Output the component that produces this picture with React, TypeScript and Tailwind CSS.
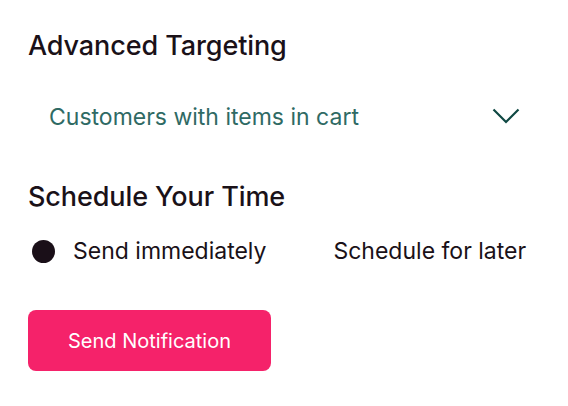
import { useState } from "react";

const options = ["Send immediately", "Schedule for later"];

export default function App() {
    const [picked, setPicked] = useState(0);

    return (
        <div className="w-[568px] h-[406px] bg-white px-7 pt-[30px]" style={{ fontFamily: "Inter, 'Noto Sans', sans-serif" }}>
            <h2 className="text-[27px] leading-[32px] font-medium text-[#1a1118] tracking-[-0.1px]">Advanced Targeting</h2>

            <div className="mt-[35px] flex items-center justify-between pl-[21px] pr-[20px] h-[40px]">
                <span className="text-[23px] leading-[28px] text-[#2f6a64]">Customers with items in cart</span>
                <svg width="28" height="16" viewBox="0 0 28 16" fill="none" className="mt-[-2px]">
                    <path d="M1.5 1.5 L14 14 L26.5 1.5" stroke="#0f4843" strokeWidth="2.2" />
                </svg>
            </div>

            <h2 className="mt-[44px] text-[27px] leading-[32px] font-medium text-[#1a1118] tracking-[-0.1px]">Schedule Your Time</h2>

            <div className="mt-[22px] flex items-center gap-[67px] h-[32px]">
                {options.map((label, i) => (
                    <button key={label} onClick={() => setPicked(i)} className="flex items-center gap-[18px]">
                        {picked === i && <span className="ml-[4px] w-[23px] h-[23px] rounded-full bg-[#1a0f18]" />}
                        <span className="text-[23px] leading-[28px] text-[#1a1118]">{label}</span>
                    </button>
                ))}
            </div>

            <button className="mt-[43px] w-[243px] h-[61px] rounded-[8px] bg-[#f5226a] text-white text-[20px]">
                Send Notification
            </button>
        </div>
    );
}
